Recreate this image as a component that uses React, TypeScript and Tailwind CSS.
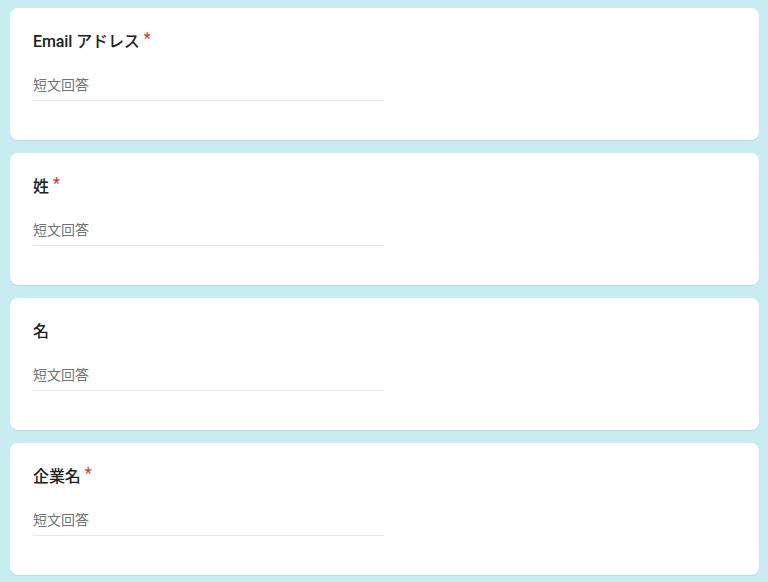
const QUESTIONS = [
  { id: 1, label: "Email アドレス", required: true },
  { id: 2, label: "姓", required: true },
  { id: 3, label: "名", required: false },
  { id: 4, label: "企業名", required: true },
];

export default function App() {
  return (
    <div
      className="min-h-[582px] bg-[#c8ecf1] pl-[10px] pr-[9px] pt-[8px] pb-[8px]"
      style={{ fontFamily: 'Roboto, "Noto Sans CJK JP", "Noto Sans", sans-serif' }}
    >
      <div className="flex flex-col gap-[13px]">
        {QUESTIONS.map((q) => (
          <div
            key={q.id}
            className="h-[132px] rounded-lg bg-white px-[23px] pt-[22px] shadow-[0_1px_1px_rgba(0,0,0,0.08)]"
          >
            <div className="flex items-start text-[16px] font-medium leading-6 text-[#202124]">
              <span className="tracking-[-0.1px]">{q.label}</span>
              {q.required && (
                <span className="ml-[4px] -mt-[3px] font-normal text-[#d93025]">*</span>
              )}
            </div>
            <div className="mt-[21px] w-[351px] border-b border-[#e8e8e8] pb-[5px] text-[14px] leading-5 text-[#70757a]">
              短文回答
            </div>
          </div>
        ))}
      </div>
    </div>
  );
}
